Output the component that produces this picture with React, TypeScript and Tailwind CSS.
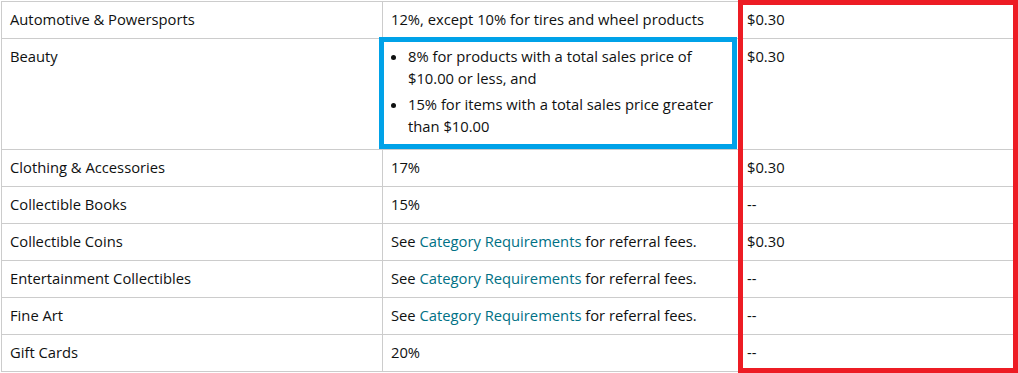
import React from 'react';

const rows: { category: string; fee: React.ReactNode; min: string }[] = [
  { category: 'Automotive & Powersports', fee: '12%, except 10% for tires and wheel products', min: '$0.30' },
  {
    category: 'Beauty',
    fee: (
      <ul className="list-disc pl-[17px]">
        <li className="mb-[4px]">8% for products with a total sales price of $10.00 or less, and</li>
        <li className="mb-[4px]">15% for items with a total sales price greater than $10.00</li>
      </ul>
    ),
    min: '$0.30',
  },
  { category: 'Clothing & Accessories', fee: '17%', min: '$0.30' },
  { category: 'Collectible Books', fee: '15%', min: '--' },
  { category: 'Collectible Coins', fee: 'link', min: '$0.30' },
  { category: 'Entertainment Collectibles', fee: 'link', min: '--' },
  { category: 'Fine Art', fee: 'link', min: '--' },
  { category: 'Gift Cards', fee: '20%', min: '--' },
];

const SeeRequirements = () => (
  <>
    See <a className="text-[#007185]">Category Requirements</a> for referral fees.
  </>
);

export default function App() {
  return (
    <div
      className="relative w-[1018px] h-[373px] overflow-hidden bg-white text-[14.75px] leading-[22px] text-[#0f1111]"
      style={{ fontFamily: '"Open Sans", "Noto Sans", sans-serif' }}
    >
      <div className="pl-[1px] pt-[1px]">
        <table className="table-fixed border-collapse w-[1020px]">
          <colgroup>
            <col className="w-[381px]" />
            <col className="w-[356px]" />
            <col className="w-[283px]" />
          </colgroup>
          <tbody>
            {rows.map(r => (
              <tr key={r.category}>
                <td className="border border-[#cccccc] px-[8px] pt-[6px] pb-[8px] align-top">{r.category}</td>
                <td className="border border-[#cccccc] px-[8px] pt-[6px] pb-[8px] align-top">
                  {r.fee === 'link' ? <SeeRequirements /> : r.fee}
                </td>
                <td className="border border-[#cccccc] px-[8px] pt-[6px] pb-[8px] align-top">{r.min}</td>
              </tr>
            ))}
          </tbody>
        </table>
      </div>

      {/* annotation boxes */}
      <div className="absolute left-[379px] top-[37px] w-[358px] h-[112px] border-[5px] border-[#00a2e8]" />
      <div className="absolute left-[738px] top-0 w-[280px] h-[373px] border-[5px] border-[#ed1c24]" />
    </div>
  );
}
